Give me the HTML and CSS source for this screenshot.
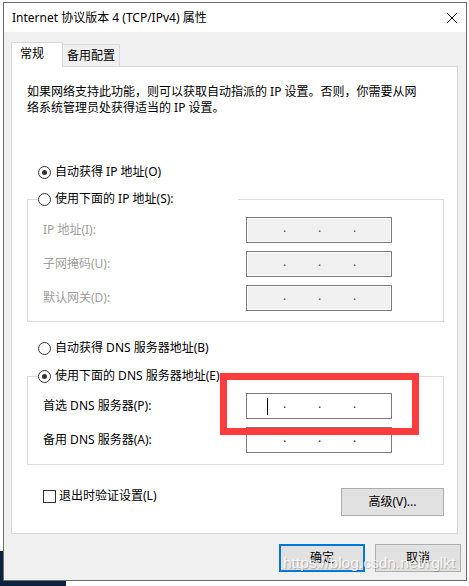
FILE: index.html
```html
<!DOCTYPE html>
<html lang="zh-CN">
<head>
    <meta charset="UTF-8">
    <meta name="viewport" content="width=device-width, initial-scale=1.0">
    <title>Internet 协议版本 4 (TCP/IPv4) 属性</title>
    <link rel="stylesheet" href="styles.css">
</head>
<body>

<div class="window">
    <div class="titlebar">
        <span class="title">Internet 协议版本 4 (TCP/IPv4) 属性</span>
        <svg class="close" width="10" height="10" viewBox="0 0 10 10">
            <path d="M0 0L10 10M10 0L0 10" stroke="#000" stroke-width="1" fill="none"/>
        </svg>
    </div>

    <div class="content">
        <div class="tabs">
            <div class="tab active">常规</div>
            <div class="tab">备用配置</div>
        </div>

        <div class="panel">
            <p class="intro">如果网络支持此功能，则可以获取自动指派的 IP 设置。否则，你需要从网<br>络系统管理员处获得适当的 IP 设置。</p>

            <label class="radio"><span class="mark checked"></span>自动获得 IP 地址(O)</label>

            <fieldset class="group">
                <legend><label class="radio"><span class="mark"></span>使用下面的 IP 地址(S):</label></legend>
                <div class="row off">
                    <span class="label">IP 地址(I):</span>
                    <div class="ip off"><span class="oct"></span><span class="sep">.</span><span class="oct"></span><span class="sep">.</span><span class="oct"></span><span class="sep">.</span><span class="oct"></span></div>
                </div>
                <div class="row off">
                    <span class="label">子网掩码(U):</span>
                    <div class="ip off"><span class="oct"></span><span class="sep">.</span><span class="oct"></span><span class="sep">.</span><span class="oct"></span><span class="sep">.</span><span class="oct"></span></div>
                </div>
                <div class="row off">
                    <span class="label">默认网关(D):</span>
                    <div class="ip off"><span class="oct"></span><span class="sep">.</span><span class="oct"></span><span class="sep">.</span><span class="oct"></span><span class="sep">.</span><span class="oct"></span></div>
                </div>
            </fieldset>

            <label class="radio radio-dns"><span class="mark"></span>自动获得 DNS 服务器地址(B)</label>

            <fieldset class="group group-dns">
                <legend><label class="radio"><span class="mark checked"></span>使用下面的 DNS 服务器地址(E)</label></legend>
                <div class="row">
                    <span class="label">首选 DNS 服务器(P):</span>
                    <div class="ip"><span class="oct"><span class="caret"></span></span><span class="sep">.</span><span class="oct"></span><span class="sep">.</span><span class="oct"></span><span class="sep">.</span><span class="oct"></span></div>
                </div>
                <div class="row">
                    <span class="label">备用 DNS 服务器(A):</span>
                    <div class="ip"><span class="oct"></span><span class="sep">.</span><span class="oct"></span><span class="sep">.</span><span class="oct"></span><span class="sep">.</span><span class="oct"></span></div>
                </div>
            </fieldset>

            <div class="footer-row">
                <label class="check"><span class="box"></span>退出时验证设置(L)</label>
                <button class="btn advanced">高级(V)...</button>
            </div>
        </div>

        <div class="buttons">
            <button class="btn default">确定</button>
            <button class="btn">取消</button>
        </div>
    </div>
</div>

<!-- annotation drawn over the screenshot -->
<div class="highlight"></div>
<div class="watermark">https://blog.csdn.net/rglkt</div>

</body>
</html>
```

FILE: styles.css
```css
body {
    margin: 0;
    padding: 2px 0 0 3px;
    height: 586px;
    box-sizing: border-box;
    overflow: hidden;
    font-family: "Noto Sans", "Noto Sans CJK SC", sans-serif;
    font-size: 12px;
    line-height: 16px;
    color: #000;
    background: linear-gradient(#0b2140, #0b2140) no-repeat 0 551px / 66px 35px, #fff;
}

.window {
    width: 464px;
    height: 579px;
    box-sizing: border-box;
    border: 1px solid #6b6b6b;
    background-color: #f0f0f0;
    overflow: hidden;
}

.titlebar {
    height: 29px;
    box-sizing: border-box;
    padding: 1px 9px 0 8px;
    display: flex;
    align-items: center;
    background-color: #fff;
}

.close {
    margin-left: auto;
}

.content {
    padding: 10px 5px 0 7px;
}

/* tabs */
.tabs {
    display: flex;
    align-items: flex-end;
}

.tab {
    width: 58px;
    height: 22px;
    box-sizing: border-box;
    margin-left: -1px;
    padding: 3px 0 0 4px;
    border: 1px solid #d9d9d9;
    border-bottom: none;
    background-color: #f0f0f0;
}

.tab.active {
    width: 52px;
    height: 25px;
    margin: 0 0 -1px 0;
    padding-left: 8px;
    background-color: #fff;
    position: relative;
    z-index: 1;
}

.panel {
    width: 447px;
    height: 468px;
    box-sizing: border-box;
    padding: 0 13px 0 15px;
    border: 1px solid #d9d9d9;
    background-color: #fff;
}

.intro {
    margin: 17px 0 0;
    white-space: nowrap;
}

/* radios */
.radio {
    display: flex;
    align-items: center;
    height: 16px;
    padding-left: 11px;
    margin-top: 48px;
    white-space: nowrap;
}

.radio-dns {
    margin-top: 18px;
}

.mark {
    width: 13px;
    height: 13px;
    box-sizing: border-box;
    margin-right: 4px;
    border: 1px solid #333;
    border-radius: 50%;
    background-color: #fff;
    display: flex;
    align-items: center;
    justify-content: center;
    flex: none;
}

.mark.checked::after {
    content: "";
    width: 5px;
    height: 5px;
    border-radius: 50%;
    background-color: #333;
}

/* group boxes */
.group {
    margin: 11px 0 0;
    padding: 10px 0 10px 10px;
    border: 1px solid #dcdcdc;
    min-width: 0;
}

.group-dns {
    margin-top: 12px;
    padding-top: 9px;
    padding-bottom: 11px;
}

.group legend {
    width: 200px;
    padding: 0;
}

.group legend .radio {
    padding-left: 0;
    margin-top: 0;
}

.row {
    display: flex;
    align-items: center;
    height: 26px;
}

.row + .row {
    margin-top: 8px;
}

.label {
    width: 208px;
    box-sizing: border-box;
    padding-left: 5px;
    white-space: nowrap;
}

.row.off .label {
    color: #a0a0a0;
}

/* ip address boxes */
.ip {
    width: 146px;
    height: 26px;
    box-sizing: border-box;
    border: 1px solid #7a7a7a;
    background-color: #fff;
    display: flex;
    align-items: center;
}

.ip.off {
    background-color: #f0f0f0;
    box-shadow: inset 0 0 0 1px #fff;
}

.oct {
    width: 32px;
    display: flex;
    align-items: center;
}

.oct:first-child {
    width: 36px;
}

.sep {
    width: 3px;
    margin-bottom: 4px;
    text-align: center;
    color: #333;
}

.ip.off .sep {
    color: #555;
}

.caret {
    width: 1px;
    height: 17px;
    margin-left: 20px;
    background-color: #000;
}

/* bottom of panel */
.footer-row {
    display: flex;
    justify-content: space-between;
    align-items: flex-start;
    margin-top: 23px;
}

.check {
    display: flex;
    align-items: center;
    height: 16px;
    padding-left: 16px;
}

.box {
    width: 13px;
    height: 13px;
    box-sizing: border-box;
    margin-right: 3px;
    border: 1px solid #333;
    background-color: #fff;
}

.btn {
    width: 86px;
    height: 28px;
    box-sizing: border-box;
    padding: 0;
    border: 1px solid #adadad;
    background-color: #e1e1e1;
    font-family: inherit;
    font-size: 12px;
    line-height: 16px;
    color: #000;
}

.btn.advanced {
    width: 103px;
}

.btn.default {
    border: 2px solid #0078d7;
}

.buttons {
    display: flex;
    justify-content: flex-end;
    gap: 10px;
    margin-top: 10px;
}

/* screenshot annotation + watermark */
.highlight {
    position: absolute;
    left: 220px;
    top: 373px;
    width: 199px;
    height: 62px;
    box-sizing: border-box;
    border: 7px solid #ff3b3b;
}

.watermark {
    position: absolute;
    left: 283px;
    top: 555px;
    font-family: "Liberation Sans", Arial, sans-serif;
    font-size: 15.5px;
    line-height: 16px;
    color: rgba(255, 255, 255, 0.85);
    text-shadow: 1px 1px 1px rgba(0, 0, 0, 0.25);
    white-space: nowrap;
}
```
